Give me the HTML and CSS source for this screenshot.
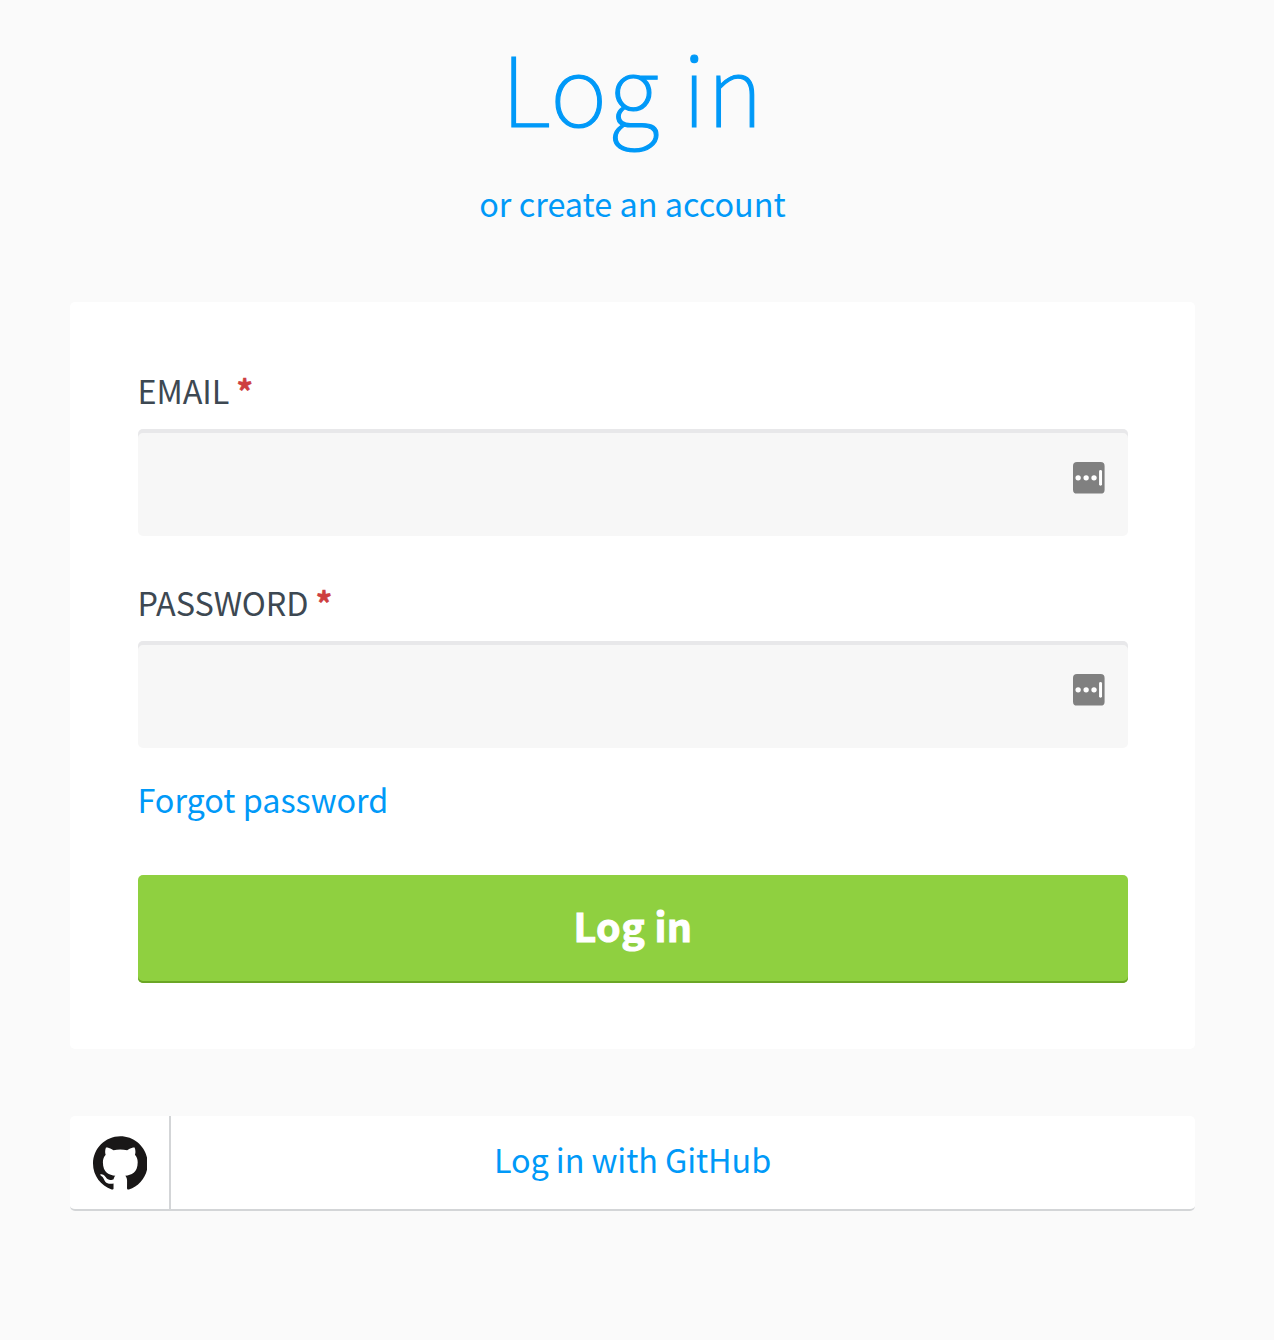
FILE: index.html
```html
<!DOCTYPE html>
<html lang="en">
<head>
<meta charset="utf-8">
<title>Log in</title>
<link rel="stylesheet" href="styles.css">
</head>
<body>
<main class="page">
  <header class="intro">
    <h1 class="title">Log in</h1>
    <a class="link create" href="#">or create an account</a>
  </header>
  <form class="card">
    <div class="field">
      <label class="label" for="email">EMAIL <span class="required">*</span></label>
      <div class="control">
        <input class="input" id="email" type="email">
        <svg class="manager" viewBox="0 0 32 32"><rect width="32" height="32" rx="4" fill="#808080"/><g fill="#fff"><circle cx="5.2" cy="16" r="2.7"/><circle cx="13.3" cy="16" r="2.7"/><circle cx="21.3" cy="16" r="2.7"/><rect x="26.4" y="8" width="3" height="16" rx="1.5"/></g></svg>
      </div>
    </div>
    <div class="field">
      <label class="label" for="password">PASSWORD <span class="required">*</span></label>
      <div class="control">
        <input class="input" id="password" type="password">
        <svg class="manager" viewBox="0 0 32 32"><rect width="32" height="32" rx="4" fill="#808080"/><g fill="#fff"><circle cx="5.2" cy="16" r="2.7"/><circle cx="13.3" cy="16" r="2.7"/><circle cx="21.3" cy="16" r="2.7"/><rect x="26.4" y="8" width="3" height="16" rx="1.5"/></g></svg>
      </div>
    </div>
    <a class="link forgot" href="#">Forgot password</a>
    <button class="submit" type="button">Log in</button>
  </form>
  <a class="github" href="#">
    <span class="mark"><svg class="octocat" viewBox="0 0.297 23.7 23.5"><path fill="#191717" d="M12 .297c-6.63 0-12 5.373-12 12 0 5.303 3.438 9.8 8.205 11.385.6.113.82-.258.82-.577 0-.285-.01-1.04-.015-2.04-3.338.724-4.042-1.61-4.042-1.61C4.422 18.07 3.633 17.7 3.633 17.7c-1.087-.744.084-.729.084-.729 1.205.084 1.838 1.236 1.838 1.236 1.07 1.835 2.809 1.305 3.495.998.108-.776.417-1.305.76-1.605-2.665-.3-5.466-1.332-5.466-5.93 0-1.31.465-2.38 1.235-3.22-.135-.303-.54-1.523.105-3.176 0 0 1.005-.322 3.3 1.23.96-.267 1.98-.399 3-.405 1.02.006 2.04.138 3 .405 2.28-1.552 3.285-1.23 3.285-1.23.645 1.653.24 2.873.12 3.176.765.84 1.23 1.91 1.23 3.22 0 4.61-2.805 5.625-5.475 5.92.42.36.81 1.096.81 2.22 0 1.606-.015 2.896-.015 3.286 0 .315.21.69.825.57C20.565 22.092 24 17.592 24 12.297c0-6.627-5.373-12-12-12"/></svg></span>
    <span class="github-text">Log in with GitHub</span>
  </a>
</main>
</body>
</html>
```
FILE: styles.css
```css
* { box-sizing: border-box; }
body {
  margin: 0;
  background: #fafafa;
  color: #3d4852;
  font: 32.4px/48px "Noto Sans CJK SC", sans-serif;
}
.page { width: 1125px; margin-left: 70px; padding-top: 25px; }
.intro { display: flex; flex-direction: column; align-items: center; height: 277px; }
.title {
  margin: 0 0 34px;
  color: #0099f8;
  font-size: 97px;
  line-height: 120px;
  font-weight: 100;
  letter-spacing: 0.8px;
  -webkit-text-stroke: 1.2px #0099f8;
}
.link { color: #0099f8; text-decoration: none; }
.card {
  display: flex;
  flex-direction: column;
  height: 747px;
  padding: 64px 67px 0 68px;
  background: #fff;
  border-radius: 5px;
}
.field { height: 212px; }
.label { display: block; height: 48px; margin: 0 0 15px -0.5px; letter-spacing: -0.08px; white-space: nowrap; }
.required { color: #ce3f3f; font-weight: 700; -webkit-text-stroke: 0.5px #ce3f3f; }
.control { position: relative; }
.input {
  display: block;
  width: 100%;
  height: 107px;
  border: 0;
  border-radius: 5px;
  background: #f7f7f7;
  box-shadow: inset 0 4px 0 #e8e8ea;
}
.manager { position: absolute; width: 31.6px; height: 31.6px; right: 23.4px; top: 33px; }
.forgot { align-self: flex-start; margin: -15px 0 0 -0.5px; letter-spacing: -0.04px; }
.submit {
  height: 108px;
  margin-top: 52px;
  padding: 0 0 8px 0;
  border: 0;
  border-radius: 5px;
  background: #8fd040;
  box-shadow: inset 0 -2px 0 #6ba625;
  color: #fff;
  font: 700 39.4px/60px "Noto Sans CJK SC", sans-serif;
  letter-spacing: 0.4px;
  -webkit-text-stroke: 1px #fff;
}
.github {
  display: flex;
  height: 95px;
  margin-top: 67px;
  background: #fff;
  border-bottom: 2px solid #d3d5d7;
  border-radius: 5px;
  color: #0099f8;
  text-decoration: none;
}
.mark { width: 101px; padding: 20px 0 0 23px; border-right: 2px solid #d3d5d7; }
.octocat { display: block; width: 54px; height: 54px; }
.github-text { flex: 1; padding: 19px 101px 0 0; text-align: center; letter-spacing: -0.1px; }
```
